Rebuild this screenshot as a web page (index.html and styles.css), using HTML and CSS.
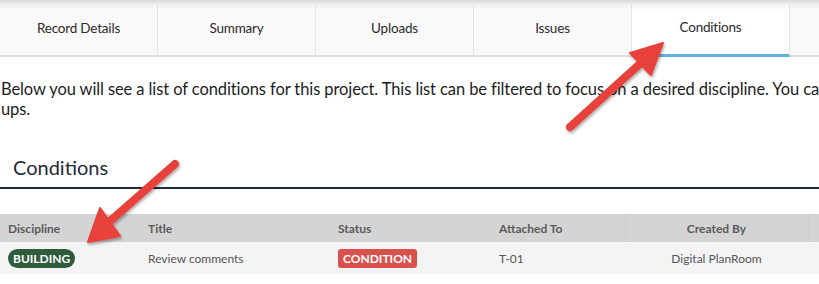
FILE: index.html
```html
<!DOCTYPE html>
<html>
<head>
<meta charset="utf-8">
<link rel="stylesheet" href="styles.css">
</head>
<body>
<div class="page">
  <nav class="tabs">
    <div class="tab">Record Details</div>
    <div class="tab">Summary</div>
    <div class="tab">Uploads</div>
    <div class="tab">Issues</div>
    <div class="tab active">Conditions</div>
    <div class="tab rest"></div>
  </nav>
  <p class="intro"><span class="line">Below you will see a list of conditions for this project. This list can be filtered to focus on a desired discipline. You can click on a condition to view details and follow-</span><wbr>ups.</p>
  <h2 class="heading">Conditions</h2>
  <table class="grid">
    <thead>
      <tr>
        <th class="c1">Discipline</th>
        <th class="c2">Title</th>
        <th class="c3">Status</th>
        <th class="c4">Attached To</th>
        <th class="c5">Created By</th>
        <th class="c6"></th>
      </tr>
    </thead>
    <tbody>
      <tr>
        <td class="c1"><span class="badge green">BUILDING</span></td>
        <td class="c2">Review comments</td>
        <td class="c3"><span class="badge red">CONDITION</span></td>
        <td class="c4">T-01</td>
        <td class="c5">Digital PlanRoom</td>
        <td class="c6"></td>
      </tr>
    </tbody>
  </table>
  <svg class="arrows" width="819" height="284" viewBox="0 0 819 284">
    <defs>
      <filter id="sh" x="-20%" y="-20%" width="140%" height="140%">
        <feDropShadow dx="1" dy="2" stdDeviation="1.5" flood-color="#000" flood-opacity="0.35"/>
      </filter>
    </defs>
    <g filter="url(#sh)" fill="#e8403b" stroke="#e8403b" stroke-linejoin="round">
      <line x1="570" y1="127" x2="642" y2="62" stroke-width="8" stroke-linecap="round"/>
      <polygon points="663,43 630,53 651,75" stroke-width="2"/>
      <line x1="175" y1="164" x2="109" y2="222" stroke-width="8" stroke-linecap="round"/>
      <polygon points="88,242 100,208 120,236" stroke-width="2"/>
    </g>
  </svg>
</div>
</body>
</html>
```
FILE: styles.css
```css
* { box-sizing: border-box; }
html, body { margin: 0; padding: 0; background: #fff; }
body { font-family: "Lato", "Open Sans", sans-serif; color: #222; width: 819px; height: 284px; overflow: hidden; }
.page { position: relative; width: 819px; height: 284px; overflow: hidden; }

.tabs { display: flex; height: 57px; width: 880px; border-bottom: 2px solid #dedede; }
.tab {
  width: 158px; flex: none; display: flex; align-items: center; justify-content: center;
  font-size: 13.5px; color: #2a2a2a;
  background: linear-gradient(#d9d9d9 0px, #f1f1f1 5px, #f9f9f9 10px, #f9f9f9 100%);
  border-right: 1px solid #e4e4e4;
  letter-spacing: -0.2px;
}
.tab.active { background: linear-gradient(#dadada 0px, #f3f3f3 5px, #fff 10px, #fff 100%); border-bottom: 3px solid #5db4df; margin-bottom: -2px; }
.tab.rest { width: 100px; }

.intro { margin: 0; padding: 22px 0 0 1px; width: 819px; font-size: 16.5px; line-height: 20px; color: #1d1d1d; letter-spacing: -0.1px; }
.intro .line { white-space: nowrap; }

.heading { margin: 35px 0 0 0; padding: 0 0 7px 13px; font-size: 20px; font-weight: 400; color: #1f2a36; border-bottom: 2px solid #1f2b38; line-height: 26px; }

.grid { margin-top: 25px; border-collapse: collapse; width: 819px; table-layout: fixed; font-size: 12px; }
.grid th { background: #d4d4d4; color: #5a5a5a; font-weight: 700; text-align: left; height: 28px; padding: 0 0 0 8px; border-right: 1px solid #cacaca; }
.grid td { background: #f4f4f4; color: #555; height: 32px; padding: 0 0 0 8px; }
.grid .c1 { width: 140px; }
.grid .c2 { width: 190px; }
.grid .c3 { width: 161px; }
.grid .c4 { width: 134px; }
.grid .c5 { width: 183px; text-align: center; padding-left: 0; }
.grid .c6 { width: 11px; }
.grid th.c1, .grid th.c2, .grid th.c3 { border-right: none; }

.badge { display: inline-block; color: #fff; font-weight: 700; font-size: 12px; line-height: 19px; height: 19px; }
.badge.green { background: #2f5c3d; border-radius: 10px; padding: 0 5px; }
.badge.red { background: #d9504c; border-radius: 3px; padding: 0 5px; }

.arrows { position: absolute; left: 0; top: 0; pointer-events: none; }
```
